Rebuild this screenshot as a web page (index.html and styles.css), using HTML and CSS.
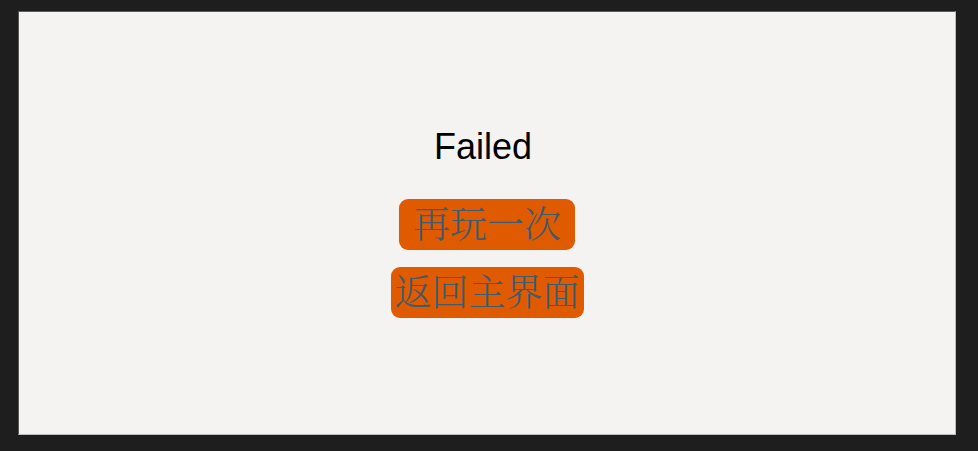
FILE: index.html
```html
<!DOCTYPE html>
<html lang="zh">
<head>
<meta charset="utf-8">
<title>Failed</title>
<link rel="stylesheet" href="styles.css">
</head>
<body>
<main class="panel">
  <div class="content">
    <h1 class="title">Failed</h1>
    <button class="btn btn-retry">再玩一次</button>
    <button class="btn btn-home">返回主界面</button>
  </div>
</main>
</body>
</html>
```
FILE: styles.css
```css
html, body {
  margin: 0;
  height: 100%;
}
body {
  background: #1e1e1e;
  box-sizing: border-box;
  padding: 11px 22px 16px 18px;
  display: flex;
}
.panel {
  flex: 1;
  background: #f4f3f1;
  border: 1px solid #bdbdbd;
  border-top-color: #5a5a5a;
  border-left-color: #5a5a5a;
  display: flex;
  align-items: center;
  justify-content: center;
}
.content {
  display: flex;
  flex-direction: column;
  align-items: center;
}
.title {
  margin: 0;
  padding-right: 8px;
  font-family: "Liberation Sans", Arial, sans-serif;
  font-weight: normal;
  font-size: 36px;
  line-height: 36px;
  color: #000;
}
.btn {
  margin-top: 34px;
  height: 51px;
  border: none;
  border-radius: 9px;
  background: #e05a00;
  color: #3e5b70;
  font-family: "Noto Serif CJK SC", "Noto Sans CJK SC", serif;
  font-weight: 300;
  font-size: 37px;
  line-height: 47px;
  padding: 0 0 4px;
  text-align: center;
}
.btn-retry {
  width: 176px;
}
.btn-home {
  margin-top: 17px;
  width: 193px;
}
```
